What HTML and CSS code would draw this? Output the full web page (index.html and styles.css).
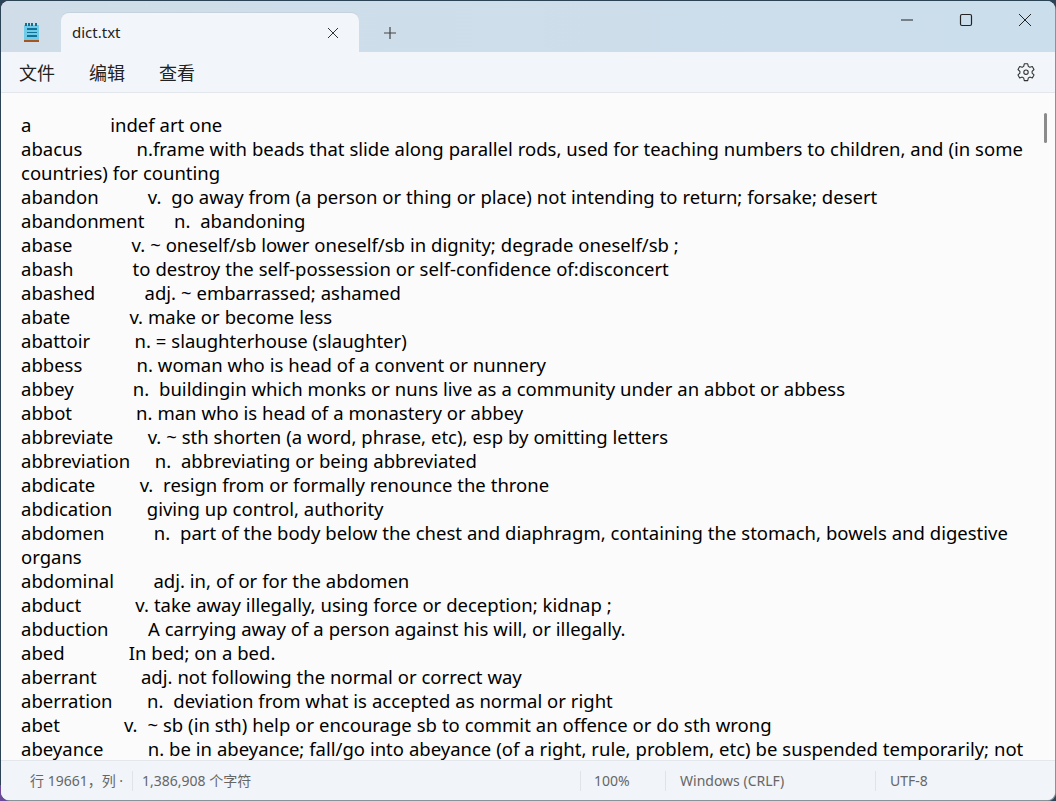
FILE: index.html
```html
<!DOCTYPE html>
<html lang="en">
<head>
    <meta charset="UTF-8">
    <meta name="viewport" content="width=device-width, initial-scale=1.0">
    <title>dict.txt</title>
    <link rel="stylesheet" href="styles.css">
</head>
<body>
    <div class="window">
        <div class="titlebar">
            <svg class="app-icon" width="18" height="20" viewBox="0 0 18 20">
                <rect x="1" y="2" width="15" height="15" fill="#6fcbe8"/>
                <rect x="2" y="0" width="2" height="3" fill="#0f6f96"/>
                <rect x="5" y="0" width="2" height="3" fill="#0f6f96"/>
                <rect x="8" y="0" width="2" height="3" fill="#0f6f96"/>
                <rect x="12" y="0" width="2" height="3" fill="#0f6f96"/>
                <rect x="4" y="5" width="10" height="2" fill="#0f7396"/>
                <rect x="4" y="9" width="10" height="1" fill="#0f7396"/>
                <rect x="4" y="12" width="10" height="2" fill="#0f7396"/>
                <rect x="1" y="17" width="15" height="2" fill="#a8541c"/>
            </svg>
            <div class="tab">
                <span class="tab-name">dict.txt</span>
                <svg class="tab-close" width="12" height="12" viewBox="0 0 12 12">
                    <path d="M1 1L11 11M11 1L1 11" stroke="#333" stroke-width="1" fill="none"/>
                </svg>
            </div>
            <svg class="tab-add" width="14" height="14" viewBox="0 0 14 14">
                <path d="M7 1V13M1 7H13" stroke="#444" stroke-width="1.2" fill="none"/>
            </svg>
            <div class="win-buttons">
                <svg width="14" height="14" viewBox="0 0 14 14"><path d="M1 7H13" stroke="#222" stroke-width="1" fill="none"/></svg>
                <svg width="14" height="14" viewBox="0 0 14 14"><rect x="1.5" y="1.5" width="11" height="11" rx="1.5" stroke="#222" stroke-width="1.2" fill="none"/></svg>
                <svg width="14" height="14" viewBox="0 0 14 14"><path d="M1 1L13 13M13 1L1 13" stroke="#222" stroke-width="1" fill="none"/></svg>
            </div>
        </div>

        <div class="menubar">
            <span class="menu-item">文件</span>
            <span class="menu-item">编辑</span>
            <span class="menu-item">查看</span>
            <svg class="settings" width="20" height="20" viewBox="0 0 20 20">
                <path d="M8.3 1.800h3.400l.6 2.600 1.500.9 2.500-.8 1.700 3-1.900 1.800v1.800l1.900 1.800-1.700 3-2.500-.8-1.500.9-.6 2.600H8.300l-.6-2.600-1.500-.9-2.500.8-1.700-3 1.900-1.800V9.300L2 7.500l1.700-3 2.500.8 1.500-.9z" stroke="#333" stroke-width="1.100" fill="none" stroke-linejoin="round"/>
                <circle cx="10" cy="10.200" r="2.200" stroke="#333" stroke-width="1.100" fill="none"/>
            </svg>
        </div>

        <div class="editor">
            <div class="text">a                indef art one
abacus           n.frame with beads that slide along parallel rods, used for teaching numbers to children, and (in some countries) for counting
abandon          v.  go away from (a person or thing or place) not intending to return; forsake; desert
abandonment      n.  abandoning
abase            v. ~ oneself/sb lower oneself/sb in dignity; degrade oneself/sb ;
abash            to destroy the self-possession or self-confidence of:disconcert
abashed          adj. ~ embarrassed; ashamed
abate            v. make or become less
abattoir         n. = slaughterhouse (slaughter)
abbess           n. woman who is head of a convent or nunnery
abbey            n.  buildingin which monks or nuns live as a community under an abbot or abbess
abbot             n. man who is head of a monastery or abbey
abbreviate       v. ~ sth shorten (a word, phrase, etc), esp by omitting letters
abbreviation     n.  abbreviating or being abbreviated
abdicate         v.  resign from or formally renounce the throne
abdication       giving up control, authority
abdomen          n.  part of the body below the chest and diaphragm, containing the stomach, bowels and digestive organs
abdominal        adj. in, of or for the abdomen
abduct           v. take away illegally, using force or deception; kidnap ;
abduction        A carrying away of a person against his will, or illegally.
abed             In bed; on a bed.
aberrant         adj. not following the normal or correct way
aberration       n.  deviation from what is accepted as normal or right
abet             v.  ~ sb (in sth) help or encourage sb to commit an offence or do sth wrong
abeyance         n. be in abeyance; fall/go into abeyance (of a right, rule, problem, etc) be suspended temporarily; not</div>
            <div class="scroll-thumb"></div>
        </div>

        <div class="statusbar">
            <div class="cell cell-pos">行 19661，列 <span class="dot">·</span></div>
            <div class="cell cell-count">1,386,908 个字符</div>
            <div class="cell cell-zoom">100%</div>
            <div class="cell cell-eol">Windows (CRLF)</div>
            <div class="cell cell-enc">UTF-8</div>
        </div>
    </div>
</body>
</html>
```

FILE: styles.css
```css
html, body {
    height: 100%;
}

body {
    margin: 0;
    background: linear-gradient(#6a4a98, #6a4a98) left bottom / 16px 16px no-repeat, #2b4354;
    font-family: "Noto Sans", "Noto Sans CJK SC", sans-serif;
    overflow: hidden;
}

.window {
    margin-left: 1px;
    margin-top: 1px;
    width: 1054px;
    height: 799px;
    display: flex;
    flex-direction: column;
    background-color: #fbfbfb;
    border-radius: 8px;
    overflow: hidden;
    box-shadow: 1px 1px 0 #8a9299;
}

.titlebar {
    height: 51px;
    flex-shrink: 0;
    display: flex;
    align-items: flex-end;
    background: linear-gradient(90deg, #d0dde9, #cbdeec);
}

.app-icon {
    margin: 0 0 9px 22px;
}

.tab {
    width: 298px;
    height: 39px;
    margin-left: 20px;
    padding: 0 20px 0 11px;
    box-sizing: border-box;
    display: flex;
    align-items: center;
    justify-content: space-between;
    background-color: #f2f6fa;
    border-radius: 8px 8px 0 0;
    box-shadow: 0 -1px 0 #c6d3df;
}

.tab-name {
    padding-bottom: 2px;
    font-size: 15px;
    color: #222;
}

.tab-add {
    margin: 0 0 12px 24px;
}

.win-buttons {
    margin-left: auto;
    margin-right: 23px;
    margin-bottom: 25px;
    display: flex;
    gap: 45px;
}

.menubar {
    height: 41px;
    flex-shrink: 0;
    box-sizing: border-box;
    display: flex;
    align-items: center;
    gap: 34px;
    padding: 0 19px 0 18px;
    background-color: #f2f6fa;
    border-bottom: 1px solid #e3e7eb;
}

.menu-item {
    font-size: 18px;
    color: #222;
}

.settings {
    margin-left: auto;
}

.editor {
    flex: 1;
    position: relative;
    overflow: hidden;
    padding: 20px 0 0 20px;
}

.text {
    width: 1012px;
    font-size: 18.5px;
    line-height: 24px;
    word-spacing: 0.12px;
    color: #000;
    white-space: pre-wrap;
}

.scroll-thumb {
    position: absolute;
    top: 20px;
    right: 8px;
    width: 3px;
    height: 30px;
    border-radius: 2px;
    background-color: #8b8b8b;
}

.statusbar {
    height: 40px;
    flex-shrink: 0;
    box-sizing: border-box;
    display: flex;
    align-items: center;
    background-color: #f1f4f8;
    border-top: 1px solid #e3e7eb;
    font-size: 14px;
    color: #666;
}

.cell {
    height: 20px;
    line-height: 20px;
    box-sizing: border-box;
    padding-left: 14px;
    white-space: nowrap;
    overflow: hidden;
    border-left: 1px solid #e0e4e8;
}

.cell-pos {
    width: 131px;
    padding-left: 29px;
    border-left: none;
}

.cell-count {
    width: 448px;
    padding-left: 9px;
}

.cell-zoom {
    width: 85px;
    padding-left: 13px;
}

.cell-eol {
    width: 210px;
}

.cell-enc {
    flex: 1;
}
```
